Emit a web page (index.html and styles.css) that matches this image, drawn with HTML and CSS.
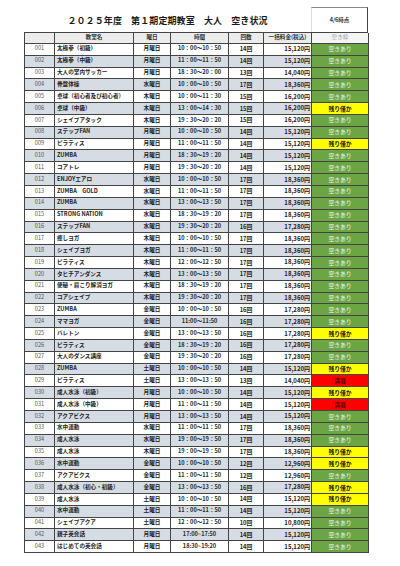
FILE: index.html
```html
<!DOCTYPE html>
<html lang="ja">
<head>
<meta charset="utf-8">
<link rel="stylesheet" href="styles.css">
</head>
<body>
<div class="sheet">
  <div class="head">
    <div class="title">２０２５年度　第１期定期教室　大人　空き状況</div>
    <div class="stamp">4/6時点</div>
  </div>
  <div class="grid">
    <div class="row hdr">
      <div class="c"></div><div class="c">教室名</div><div class="c">曜日</div><div class="c">時間</div><div class="c">回数</div><div class="c">一括料金(税込)</div><div class="c st-h">空き枠</div>
    </div>
  </div>
  <div class="grid" id="body"></div>
</div>
<script src="app.js"></script>
</body>
</html>
```

FILE: app.js
```js
const rows = [
["001","太極拳（初級）","月曜日","10：00〜10：50","14回","15,120円","a"],
["002","太極拳（中級）","月曜日","11：00〜11：50","14回","15,120円","a"],
["003","大人の室内サッカー","月曜日","18：30〜20：00","13回","14,040円","a"],
["004","骨盤体操","水曜日","10：00〜10：50","17回","18,360円","a"],
["005","卓球（初心者及び初心者）","木曜日","10：00〜11：30","15回","16,200円","a"],
["006","卓球（中級）","木曜日","13：00〜14：30","15回","16,200円","y"],
["007","シェイプアタック","木曜日","19：30〜20：20","15回","16,200円","a"],
["008","ステップFAN","月曜日","10：00〜10：50","14回","15,120円","a"],
["009","ピラティス","月曜日","11：00〜11：50","14回","15,120円","y"],
["010","ZUMBA","月曜日","18：30〜19：20","14回","15,120円","a"],
["011","コアトレ","月曜日","19：30〜20：20","14回","15,120円","a"],
["012","ENJOYエアロ","水曜日","10：00〜10：50","17回","18,360円","a"],
["013","ZUMBA　GOLD","水曜日","11：00〜11：50","17回","18,360円","a"],
["014","ZUMBA","水曜日","13：00〜13：50","17回","18,360円","a"],
["015","STRONG NATION","水曜日","18：30〜19：20","17回","18,360円","a"],
["016","ステップFAN","水曜日","19：30〜20：20","16回","17,280円","a"],
["017","癒しヨガ","木曜日","10：00〜10：50","17回","18,360円","a"],
["018","シェイプヨガ","木曜日","11：00〜11：50","17回","18,360円","a"],
["019","ピラティス","木曜日","12：00〜12：50","17回","18,360円","a"],
["020","タヒチアンダンス","木曜日","13：00〜13：50","17回","18,360円","a"],
["021","便秘・肩こり解消ヨガ","木曜日","18：30〜19：20","17回","18,360円","a"],
["022","コアシェイプ","木曜日","19：30〜20：20","17回","18,360円","a"],
["023","ZUMBA","金曜日","10：00〜10：50","16回","17,280円","a"],
["024","ママヨガ","金曜日","11:00〜11:50","16回","17,280円","a"],
["025","バレトン","金曜日","13：00〜13：50","16回","17,280円","y"],
["026","ピラティス","金曜日","18：30〜19：20","16回","17,280円","a"],
["027","大人のダンス講座","金曜日","19：30〜20：20","16回","17,280円","a"],
["028","ZUMBA","土曜日","10：00〜10：50","14回","15,120円","y"],
["029","ピラティス","土曜日","13：00〜13：50","13回","14,040円","r"],
["030","成人水泳（初級）","月曜日","10：00〜10：50","14回","15,120円","y"],
["031","成人水泳（中級）","月曜日","11：00〜11：50","14回","15,120円","r"],
["032","アクアビクス","月曜日","13：00〜13：50","14回","15,120円","a"],
["033","水中運動","水曜日","11：00〜11：50","17回","18,360円","a"],
["034","成人水泳","水曜日","19：00〜19：50","17回","18,360円","a"],
["035","成人水泳","木曜日","19：00〜19：50","17回","18,360円","y"],
["036","水中運動","金曜日","10：00〜10：50","12回","12,960円","y"],
["037","アクアビクス","金曜日","11：00〜11：50","12回","12,960円","a"],
["038","成人水泳（初心・初級）","金曜日","13：00〜13：50","16回","17,280円","y"],
["039","成人水泳","土曜日","10：00〜10：50","14回","15,120円","y"],
["040","水中運動","土曜日","11：00〜11：50","14回","15,120円","a"],
["041","シェイプアクア","土曜日","12：00〜12：50","10回","10,800円","a"],
["042","親子英会話","月曜日","17:00~17:50","14回","15,120円","a"],
["043","はじめての英会話","月曜日","18:30~19:20","14回","15,120円","a"]
];
const label = {a:"空きあり", y:"残り僅か", r:"満員"};
const body = document.getElementById("body");
rows.forEach((r, i) => {
  const row = document.createElement("div");
  row.className = "row" + (i % 2 ? " alt" : "");
  const cls = ["num","name","day","time","cnt","price","st st-" + r[6]];
  for (let k = 0; k < 7; k++) {
    const c = document.createElement("div");
    c.className = "c " + cls[k];
    c.textContent = k === 6 ? label[r[6]] : r[k];
    row.appendChild(c);
  }
  body.appendChild(row);
});
```

FILE: styles.css
```css
* { box-sizing: border-box; }
body {
  margin: 0;
  background: #fff;
  font-family: "Noto Sans CJK JP", "Noto Sans", sans-serif;
  color: #222;
}
.sheet {
  margin: 7px 0 0 24px;
  width: 344px;
}
.head {
  display: flex;
  height: 25px;
}
.title {
  width: 287px;
  display: flex;
  align-items: center;
  justify-content: center;
  font-size: 9px;
  font-weight: bold;
  letter-spacing: 0.1px;
  color: #1a1a1a;
  padding-top: 1px;
}
.stamp {
  width: 57px;
  border-top: 1px solid #888;
  border-right: 1px solid #444;
  border-left: 1px solid #ddd;
  display: flex;
  align-items: center;
  justify-content: center;
  font-size: 5.5px;
  font-weight: bold;
  color: #333;
}
.grid {
  border-left: 1px solid #444;
}
.row {
  display: grid;
  grid-template-columns: 30px 79px 37px 58px 35px 48px 57px;
  height: 11.85px;
  background: #fff;
}
.row.alt { background: #d6dce4; }
.row.hdr {
  background: #ececec;
  border-top: 1px solid #444;
}
.c {
  border-right: 1px solid #444;
  border-bottom: 1px solid #444;
  font-size: 5.6px;
  line-height: 1;
  display: flex;
  align-items: center;
  justify-content: center;
  white-space: nowrap;
  overflow: hidden;
  font-weight: bold;
}
.hdr .c { font-weight: bold; color: #333; }
.hdr .st-h { color: #999; font-weight: normal; background: #f4f4f4; }
.num { font-weight: normal; color: #555; }
.name { justify-content: flex-start; padding-left: 2px; }
.time { color: #2a2a2a; }
.price { justify-content: flex-end; padding-right: 1px; font-size: 6px; }
.cnt { font-size: 5.8px; }
.st { font-size: 5.8px; }
.st-a { background: #6ca544; color: #eef6e8; font-weight: normal; }
.st-y { background: #ffff00; color: #111; }
.st-r { background: #ff0000; color: #5a0000; }
```
